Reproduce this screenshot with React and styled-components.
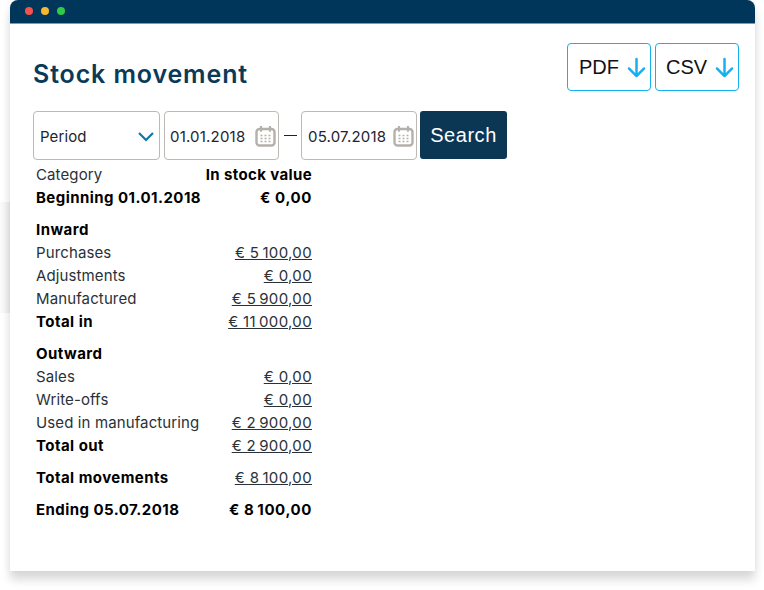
import styled, { createGlobalStyle } from 'styled-components';

const GlobalStyle = createGlobalStyle`
  html, body {
    margin: 0;
    padding: 0;
    background: #fff;
  }
  body {
    font-family: Inter, "Liberation Sans", sans-serif;
    color: #111;
  }
`;

const sections = [
  {
    rows: [
      { label: 'Category', value: 'In stock value', valueBold: true, heading: true },
      { label: 'Beginning 01.01.2018', value: '€ 0,00', bold: true, valueBold: true },
    ],
  },
  {
    rows: [
      { label: 'Inward', bold: true },
      { label: 'Purchases', value: '€ 5\u2009100,00', link: true },
      { label: 'Adjustments', value: '€ 0,00', link: true },
      { label: 'Manufactured', value: '€ 5\u2009900,00', link: true },
      { label: 'Total in', value: '€ 11\u2009000,00', bold: true, link: true },
    ],
  },
  {
    rows: [
      { label: 'Outward', bold: true },
      { label: 'Sales', value: '€ 0,00', link: true },
      { label: 'Write-offs', value: '€ 0,00', link: true },
      { label: 'Used in manufacturing', value: '€ 2\u2009900,00', link: true },
      { label: 'Total out', value: '€ 2\u2009900,00', bold: true, link: true },
    ],
  },
  { rows: [{ label: 'Total movements', value: '€ 8\u2009100,00', bold: true, link: true }] },
  { rows: [{ label: 'Ending 05.07.2018', value: '€ 8\u2009100,00', bold: true, valueBold: true }] },
];

const CalendarIcon = () => (
  <CalendarSvg viewBox="0 0 21 21" fill="none">
    <rect x="1.5" y="3" width="18" height="16.5" rx="3" stroke="#b5b0aa" strokeWidth="2.4" />
    <path d="M6 .8v4M15 .8v4" stroke="#b5b0aa" strokeWidth="2.2" strokeLinecap="round" />
    <path d="M5.5 9.5h2M9.5 9.5h2M13.5 9.5h2M5.5 12.5h2M9.5 12.5h2M13.5 12.5h2M5.5 15.5h2M9.5 15.5h2M13.5 15.5h2" stroke="#b5b0aa" strokeWidth="1.7" />
  </CalendarSvg>
);

const DownArrow = () => (
  <ArrowSvg viewBox="0 0 20 22" fill="none">
    <path d="M10 2v18M2 12l8 8 8-8" stroke="#14b0f0" strokeWidth="2.6" strokeLinecap="round" strokeLinejoin="round" />
  </ArrowSvg>
);

const App = () => {
  return (
    <>
      <GlobalStyle />
      <Page>
        <BackPanel />
        <Window>
          <TitleBar>
            <Dot color="#f5524c" />
            <Dot color="#f6b92d" />
            <Dot color="#2fca49" />
          </TitleBar>
          <Content>
            <Header>
              <Title>Stock movement</Title>
              <Exports>
                <ExportButton $pad={11}>PDF <DownArrow /></ExportButton>
                <ExportButton $pad={10}>CSV <DownArrow /></ExportButton>
              </Exports>
            </Header>
            <Filters>
              <PeriodSelect>
                Period
                <svg width="18" height="11" viewBox="0 0 18 11" fill="none">
                  <path d="M2 2l7 7 7-7" stroke="#0c78a8" strokeWidth="2.2" />
                </svg>
              </PeriodSelect>
              <DateField $width={115} $pad={5}>01.01.2018<CalendarIcon /></DateField>
              <Dash />
              <DateField $width={116} $pad={6}>05.07.2018<CalendarIcon /></DateField>
              <SearchButton>Search</SearchButton>
            </Filters>
            <Report>
              {sections.map((section, i) => (
                <Section key={i}>
                  {section.rows.map(row => (
                    <Row key={row.label}>
                      <Label $bold={row.bold}>{row.label}</Label>
                      {row.value && (
                        <Value $bold={row.valueBold} $link={row.link} $heading={row.heading}>{row.value}</Value>
                      )}
                    </Row>
                  ))}
                </Section>
              ))}
            </Report>
          </Content>
        </Window>
      </Page>
    </>
  );
};

const Page = styled.div`
  position: relative;
  width: 764px;
  height: 590px;
  padding: 0 9px 0 10px;
  box-sizing: border-box;
  overflow: hidden;
`;

/* faint edge of something sitting behind the window */
const BackPanel = styled.div`
  position: absolute;
  left: 0;
  top: 202px;
  width: 10px;
  height: 111px;
  background: linear-gradient(to right, #fbfbfb, #f0f0f0);
`;

const Window = styled.div`
  position: relative;
  height: 571px;
  background: #fff;
  border-radius: 8px 8px 0 0;
  box-shadow: 0 9px 10px rgba(0, 0, 0, 0.14), 0 0 10px rgba(0, 0, 0, 0.05);
`;

const TitleBar = styled.div`
  height: 24px;
  background: #00365a;
  border-radius: 8px 8px 0 0;
  border-bottom: 1px solid #7f9aad;
  box-sizing: border-box;
  display: flex;
  align-items: center;
  gap: 8px;
  padding: 0 0 1px 15px;
`;

const Dot = styled.span`
  width: 8px;
  height: 8px;
  border-radius: 50%;
  background: ${p => p.color};
`;

const Content = styled.div`
  padding: 19px 16px 0 23px;
`;

const Header = styled.div`
  display: flex;
  justify-content: space-between;
  align-items: flex-start;
  height: 48px;
`;

const Title = styled.h1`
  margin: 15px 0 0;
  font-size: 25px;
  line-height: 32px;
  font-weight: 600;
  letter-spacing: 0.87px;
  color: #0a3a58;
`;

const Exports = styled.div`
  display: flex;
  gap: 4px;
`;

const ExportButton = styled.button`
  width: 84px;
  height: 48px;
  padding: 0 0 0 ${p => p.$pad}px;
  display: flex;
  align-items: center;
  gap: 8px;
  background: #fff;
  border: 1px solid #14b0f0;
  border-radius: 4px;
  font-family: "Liberation Sans", Arial, sans-serif;
  font-size: 20px;
  color: #111;
`;

const ArrowSvg = styled.svg`
  width: 19px;
  height: 21px;
  flex: none;
`;

const Filters = styled.div`
  display: flex;
  align-items: flex-start;
  margin-top: 20px;
`;

const Field = styled.div`
  height: 49px;
  box-sizing: border-box;
  background: #fff;
  border: 1px solid #bdb9b4;
  border-radius: 4px;
  display: flex;
  align-items: center;
  justify-content: space-between;
  font-size: 15px;
  letter-spacing: 0.2px;
  color: #1b2530;
`;

const PeriodSelect = styled(Field)`
  width: 127px;
  padding: 1px 4px 0 6px;
  margin-right: 4px;
  letter-spacing: 0.1px;
`;

const DateField = styled(Field)`
  width: ${p => p.$width}px;
  padding: 1px 2px 0 ${p => p.$pad}px;
`;

const CalendarSvg = styled.svg`
  width: 21px;
  height: 21px;
  flex: none;
`;

const Dash = styled.span`
  width: 13px;
  height: 1px;
  margin: 24px 4px 0 5px;
  background: #222;
`;

const SearchButton = styled.button`
  width: 87px;
  height: 48px;
  margin-left: 3px;
  padding: 0;
  background: #0b3755;
  border: none;
  border-radius: 3px;
  font-family: "Liberation Sans", Arial, sans-serif;
  font-size: 20px;
  letter-spacing: 0.55px;
  color: #fff;
`;

const Report = styled.div`
  width: 276px;
  margin: 3px 0 0 3px;
  display: flex;
  flex-direction: column;
  gap: 9px;
`;

const Section = styled.div``;

const Row = styled.div`
  height: 23px;
  display: flex;
  justify-content: space-between;
  align-items: center;
  font-size: 15px;
`;

const Label = styled.span`
  font-weight: ${p => (p.$bold ? 700 : 400)};
  letter-spacing: ${p => (p.$bold ? '0.45px' : '0.12px')};
  color: ${p => (p.$bold ? '#000' : '#2a3138')};
`;

const Value = styled.span`
  font-weight: ${p => (p.$bold ? 700 : 400)};
  letter-spacing: ${p => (p.$heading ? '0.38px' : p.$bold ? '0.6px' : '0.35px')};
  text-decoration: ${p => (p.$link ? 'underline' : 'none')};
  color: ${p => (p.$bold ? '#000' : '#2a3138')};
`;

export default App;
